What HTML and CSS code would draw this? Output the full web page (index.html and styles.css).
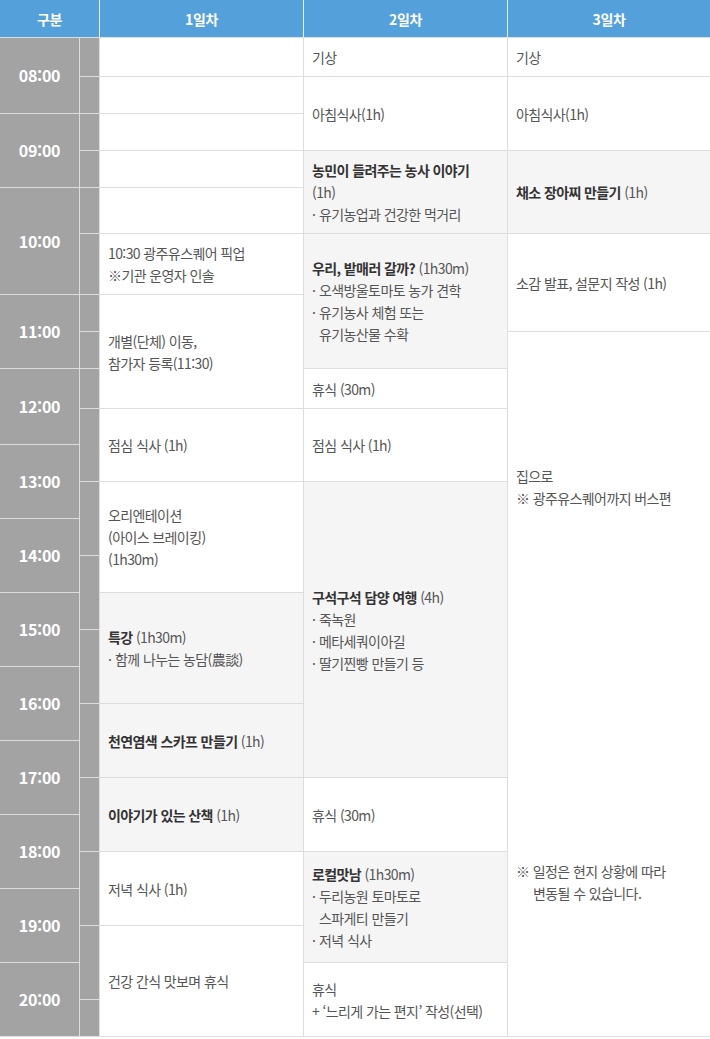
FILE: index.html
```html
<!DOCTYPE html>
<html lang="ko">
<head>
<meta charset="utf-8">
<title>일정표</title>
<link rel="stylesheet" href="styles.css">
</head>
<body>
<div class="schedule">
  <div class="head">
    <div class="hc">구분</div>
    <div class="hc">1일차</div>
    <div class="hc">2일차</div>
    <div class="hc">3일차</div>
  </div>
  <div class="body">
    <!-- time column -->
    <div class="t s2">08:00</div>
    <div class="t s2">09:00</div>
    <div class="t s2">10:00</div>
    <div class="t s2">11:00</div>
    <div class="t s2">12:00</div>
    <div class="t s2">13:00</div>
    <div class="t s2">14:00</div>
    <div class="t s2">15:00</div>
    <div class="t s2">16:00</div>
    <div class="t s2">17:00</div>
    <div class="t s2">18:00</div>
    <div class="t s2">19:00</div>
    <div class="t s2">20:00</div>
    <!-- sub column -->
    <div class="sub"></div>
    <div class="sub"></div>
    <div class="sub"></div>
    <div class="sub"></div>
    <div class="sub"></div>
    <div class="sub"></div>
    <div class="sub"></div>
    <div class="sub"></div>
    <div class="sub"></div>
    <div class="sub s2"></div>
    <div class="sub s2"></div>
    <div class="sub s2"></div>
    <div class="sub s2"></div>
    <div class="sub s2"></div>
    <div class="sub s2"></div>
    <div class="sub s2"></div>
    <div class="sub s2"></div>
    <div class="sub"></div>
    <!-- day 1 -->
    <div class="c"></div>
    <div class="c"></div>
    <div class="c"></div>
    <div class="c"></div>
    <div class="c"></div>
    <div class="c"><p>10:30 광주유스퀘어 픽업</p><p>※기관 운영자 인솔</p></div>
    <div class="c s3"><p>개별(단체) 이동,</p><p>참가자 등록(11:30)</p></div>
    <div class="c s2"><p>점심 식사 (1h)</p></div>
    <div class="c s3"><p>오리엔테이션</p><p>(아이스 브레이킹)</p><p>(1h30m)</p></div>
    <div class="c g s3"><p><strong>특강</strong> (1h30m)</p><p class="b"><span class="dot">·</span><span>함께 나누는 농담(農談)</span></p></div>
    <div class="c g s2"><p><strong>천연염색 스카프 만들기</strong> (1h)</p></div>
    <div class="c g s2"><p><strong>이야기가 있는 산책</strong> (1h)</p></div>
    <div class="c s2"><p>저녁 식사 (1h)</p></div>
    <div class="c s3"><p>건강 간식 맛보며 휴식</p></div>
    <!-- day 2 -->
    <div class="c"><p>기상</p></div>
    <div class="c s2"><p>아침식사(1h)</p></div>
    <div class="c g s2"><p><strong>농민이 들려주는 농사 이야기</strong><br>(1h)</p><p class="b"><span class="dot">·</span><span>유기농업과 건강한 먹거리</span></p></div>
    <div class="c g s3"><p><strong>우리, 밭매러 갈까?</strong> (1h30m)</p><p class="b"><span class="dot">·</span><span>오색방울토마토 농가 견학</span></p><p class="b"><span class="dot">·</span><span>유기농사 체험 또는<br>유기농산물 수확</span></p></div>
    <div class="c"><p>휴식 (30m)</p></div>
    <div class="c s2"><p>점심 식사 (1h)</p></div>
    <div class="c g s8"><p><strong>구석구석 담양 여행</strong> (4h)</p><p class="b"><span class="dot">·</span><span>죽녹원</span></p><p class="b"><span class="dot">·</span><span>메타세쿼이아길</span></p><p class="b"><span class="dot">·</span><span>딸기찐빵 만들기 등</span></p></div>
    <div class="c s2"><p>휴식 (30m)</p></div>
    <div class="c g s3"><p><strong>로컬맛남</strong> (1h30m)</p><p class="b"><span class="dot">·</span><span>두리농원 토마토로<br>스파게티 만들기</span></p><p class="b"><span class="dot">·</span><span>저녁 식사</span></p></div>
    <div class="c s2"><p>휴식</p><p>+ ‘느리게 가는 편지’ 작성(선택)</p></div>
    <!-- day 3 -->
    <div class="c"><p>기상</p></div>
    <div class="c s2"><p>아침식사(1h)</p></div>
    <div class="c g s2"><p><strong>채소 장아찌 만들기</strong> (1h)</p></div>
    <div class="c s2"><p>소감 발표, 설문지 작성 (1h)</p></div>
    <div class="c s19">
      <p>집으로</p>
      <p>※ 광주유스퀘어까지 버스편</p>
      <p class="note">※ 일정은 현지 상황에 따라<br>변동될 수 있습니다.</p>
    </div>
  </div>
</div>
</body>
</html>
```
FILE: styles.css
```css
* {
  box-sizing: border-box;
}

html, body {
  margin: 0;
  padding: 0;
  background: #fff;
}

body {
  font-family: "Noto Sans CJK KR", "Noto Sans", sans-serif;
  width: 710px;
}

p {
  margin: 0;
}

.schedule {
  display: flex;
  flex-direction: column;
  gap: 1px;
  background: #dddddd;
  padding-bottom: 1px;
}

.head {
  display: grid;
  grid-template-columns: 99px 203px 203px 1fr;
  gap: 1px;
  height: 37px;
  background: #e8eef4;
}

.hc {
  background: #53a0da;
  color: #fff;
  font-weight: 700;
  font-size: 14px;
  display: flex;
  align-items: center;
  justify-content: center;
  letter-spacing: -0.3px;
}

.body {
  display: grid;
  grid-template-columns: 79px 19px 203px 203px 1fr;
  grid-template-rows: 38px 36px 36px 36px 45px 60px 36px 36px 39px 35px repeat(16, 36px);
  grid-auto-flow: column;
  gap: 1px;
}

.s2 { grid-row: span 2; }
.s3 { grid-row: span 3; }
.s8 { grid-row: span 8; }
.s19 { grid-row: span 19; }

.t {
  background: #a3a3a3;
  color: #fff;
  font-weight: 700;
  font-size: 16px;
  display: flex;
  align-items: center;
  justify-content: center;
  letter-spacing: -0.3px;
  padding-bottom: 1px;
}

.sub {
  background: #a3a3a3;
}

.c {
  background: #fff;
  display: flex;
  flex-direction: column;
  justify-content: center;
  padding: 0 8px;
  font-size: 14px;
  line-height: 22px;
  color: #555;
  letter-spacing: -0.6px;
}

.c strong {
  color: #333;
  font-weight: 700;
}

.g {
  background: #f5f5f5;
}

.b {
  display: flex;
}

.dot {
  flex: 0 0 7px;
}

.note {
  margin-top: 351px;
  padding-left: 17px;
  text-indent: -17px;
}
```
